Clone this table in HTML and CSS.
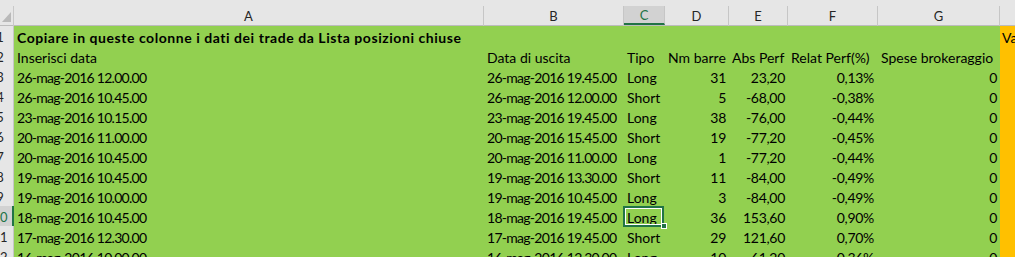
FILE: index.html
```html
<!DOCTYPE html>
<html lang="it">
<head>
<meta charset="utf-8">
<title>Foglio</title>
<link rel="stylesheet" href="styles.css">
</head>
<body>
<div class="sheet">
  <div class="topstrip"></div>
  <div class="row hdr">
    <div class="corner"><svg width="13" height="19" viewBox="0 0 13 19"><polygon points="2,16 11,16 11,6" fill="#b9b9b9"/></svg></div>
    <div class="ch">A</div>
    <div class="ch">B</div>
    <div class="ch sel">C</div>
    <div class="ch">D</div>
    <div class="ch">E</div>
    <div class="ch">F</div>
    <div class="ch">G</div>
    <div class="ch last"></div>
  </div>

  <div class="row data">
    <div class="rh"><span>1</span></div>
    <div class="c title">Copiare in queste colonne i dati dei trade da Lista posizioni chiuse</div>
    <div class="c h">Va</div>
  </div>

  <div class="row data">
    <div class="rh"><span>2</span></div>
    <div class="c">Inserisci data</div>
    <div class="c">Data di uscita</div>
    <div class="c">Tipo</div>
    <div class="c">Nm barre</div>
    <div class="c">Abs Perf</div>
    <div class="c">Relat Perf(%)</div>
    <div class="c">Spese brokeraggio</div>
    <div class="c h"></div>
  </div>

  <div class="row data">
    <div class="rh"><span>3</span></div>
    <div class="c d">26-mag-2016 12.00.00</div>
    <div class="c d">26-mag-2016 19.45.00</div>
    <div class="c">Long</div>
    <div class="c n">31</div>
    <div class="c n">23,20</div>
    <div class="c n p">0,13%</div>
    <div class="c n">0</div>
    <div class="c h"></div>
  </div>

  <div class="row data">
    <div class="rh"><span>4</span></div>
    <div class="c d">26-mag-2016 10.45.00</div>
    <div class="c d">26-mag-2016 12.00.00</div>
    <div class="c">Short</div>
    <div class="c n">5</div>
    <div class="c n">-68,00</div>
    <div class="c n p">-0,38%</div>
    <div class="c n">0</div>
    <div class="c h"></div>
  </div>

  <div class="row data">
    <div class="rh"><span>5</span></div>
    <div class="c d">23-mag-2016 10.15.00</div>
    <div class="c d">23-mag-2016 19.45.00</div>
    <div class="c">Long</div>
    <div class="c n">38</div>
    <div class="c n">-76,00</div>
    <div class="c n p">-0,44%</div>
    <div class="c n">0</div>
    <div class="c h"></div>
  </div>

  <div class="row data">
    <div class="rh"><span>6</span></div>
    <div class="c d">20-mag-2016 11.00.00</div>
    <div class="c d">20-mag-2016 15.45.00</div>
    <div class="c">Short</div>
    <div class="c n">19</div>
    <div class="c n">-77,20</div>
    <div class="c n p">-0,45%</div>
    <div class="c n">0</div>
    <div class="c h"></div>
  </div>

  <div class="row data">
    <div class="rh"><span>7</span></div>
    <div class="c d">20-mag-2016 10.45.00</div>
    <div class="c d">20-mag-2016 11.00.00</div>
    <div class="c">Long</div>
    <div class="c n">1</div>
    <div class="c n">-77,20</div>
    <div class="c n p">-0,44%</div>
    <div class="c n">0</div>
    <div class="c h"></div>
  </div>

  <div class="row data">
    <div class="rh"><span>8</span></div>
    <div class="c d">19-mag-2016 10.45.00</div>
    <div class="c d">19-mag-2016 13.30.00</div>
    <div class="c">Short</div>
    <div class="c n">11</div>
    <div class="c n">-84,00</div>
    <div class="c n p">-0,49%</div>
    <div class="c n">0</div>
    <div class="c h"></div>
  </div>

  <div class="row data">
    <div class="rh"><span>9</span></div>
    <div class="c d">19-mag-2016 10.00.00</div>
    <div class="c d">19-mag-2016 10.45.00</div>
    <div class="c">Long</div>
    <div class="c n">3</div>
    <div class="c n">-84,00</div>
    <div class="c n p">-0,49%</div>
    <div class="c n">0</div>
    <div class="c h"></div>
  </div>

  <div class="row data">
    <div class="rh rsel"><span>10</span></div>
    <div class="c d">18-mag-2016 10.45.00</div>
    <div class="c d">18-mag-2016 19.45.00</div>
    <div class="c active">Long<div class="selbox"></div><div class="handle"></div></div>
    <div class="c n">36</div>
    <div class="c n">153,60</div>
    <div class="c n p">0,90%</div>
    <div class="c n">0</div>
    <div class="c h"></div>
  </div>

  <div class="row data">
    <div class="rh"><span>11</span></div>
    <div class="c d">17-mag-2016 12.30.00</div>
    <div class="c d">17-mag-2016 19.45.00</div>
    <div class="c">Short</div>
    <div class="c n">29</div>
    <div class="c n">121,60</div>
    <div class="c n p">0,70%</div>
    <div class="c n">0</div>
    <div class="c h"></div>
  </div>

  <div class="row data">
    <div class="rh"><span>12</span></div>
    <div class="c d">16-mag-2016 10.00.00</div>
    <div class="c d">16-mag-2016 12.30.00</div>
    <div class="c">Long</div>
    <div class="c n">10</div>
    <div class="c n">61,20</div>
    <div class="c n p">0,36%</div>
    <div class="c n">0</div>
    <div class="c h"></div>
  </div>
</div>
</body>
</html>
```

FILE: styles.css
```css
html, body {
  margin: 0;
  padding: 0;
  background: #ffffff;
}

.sheet {
  width: 1015px;
  height: 257px;
  overflow: hidden;
  font-family: Lato, "Liberation Sans", sans-serif;
  font-size: 14px;
  color: #000;
}

.topstrip {
  height: 6px;
  background: #e6e6e6;
}

.row {
  display: grid;
  grid-template-columns: 14px 470px 140px 41px 64px 59px 90px 122px 15px;
  height: 20px;
}

.hdr {
  background: #e6e6e6;
  box-sizing: border-box;
  border-bottom: 1px solid #bcbcbc;
  height: 20px;
}

.corner {
  border-right: 1px solid #c8c8c8;
  box-sizing: border-box;
  overflow: hidden;
}

.corner svg {
  display: block;
}

.ch {
  box-sizing: border-box;
  border-right: 1px solid #c6c6c6;
  text-align: center;
  font-size: 13px;
  line-height: 20px;
  color: #262626;
}

.ch.sel {
  background: #d2d2d2;
  color: #217346;
  border-bottom: 2px solid #217346;
  line-height: 18px;
  height: 19px;
}

.ch.last {
  border-right: none;
}

.data {
  background: #92d050;
}

.rh {
  background: #e6e6e6;
  box-sizing: border-box;
  border-right: 1px solid #c6c6c6;
  overflow: hidden;
  color: #262626;
  font-size: 13px;
  line-height: 22px;
}

.rh span {
  display: block;
  width: 26px;
  margin-left: -13px;
  text-align: center;
}

.rh.rsel {
  background: #d2d2d2;
  border-right: 2px solid #217346;
  color: #217346;
}

.c {
  padding: 0 3px;
  line-height: 24px;
  white-space: nowrap;
  overflow: visible;
}

.c.d {
  letter-spacing: -0.72px;
}

.c.n {
  text-align: right;
  letter-spacing: -0.3px;
}

.c.p {
  padding-right: 4px;
}

.title {
  grid-column: span 7;
  font-weight: bold;
  letter-spacing: 0.55px;
}

.c.h {
  background: #ffc000;
  overflow: hidden;
  padding: 0 2px;
}

.active {
  position: relative;
}

.selbox {
  position: absolute;
  left: -1px;
  top: 0;
  width: 41px;
  height: 21px;
  box-sizing: border-box;
  border: 2px solid #217346;
  box-shadow: inset 0 0 0 1px #ffffff;
}

.handle {
  position: absolute;
  left: 37px;
  top: 17px;
  width: 6px;
  height: 6px;
  box-sizing: border-box;
  background: #217346;
  border: 1px solid #ffffff;
}
```
